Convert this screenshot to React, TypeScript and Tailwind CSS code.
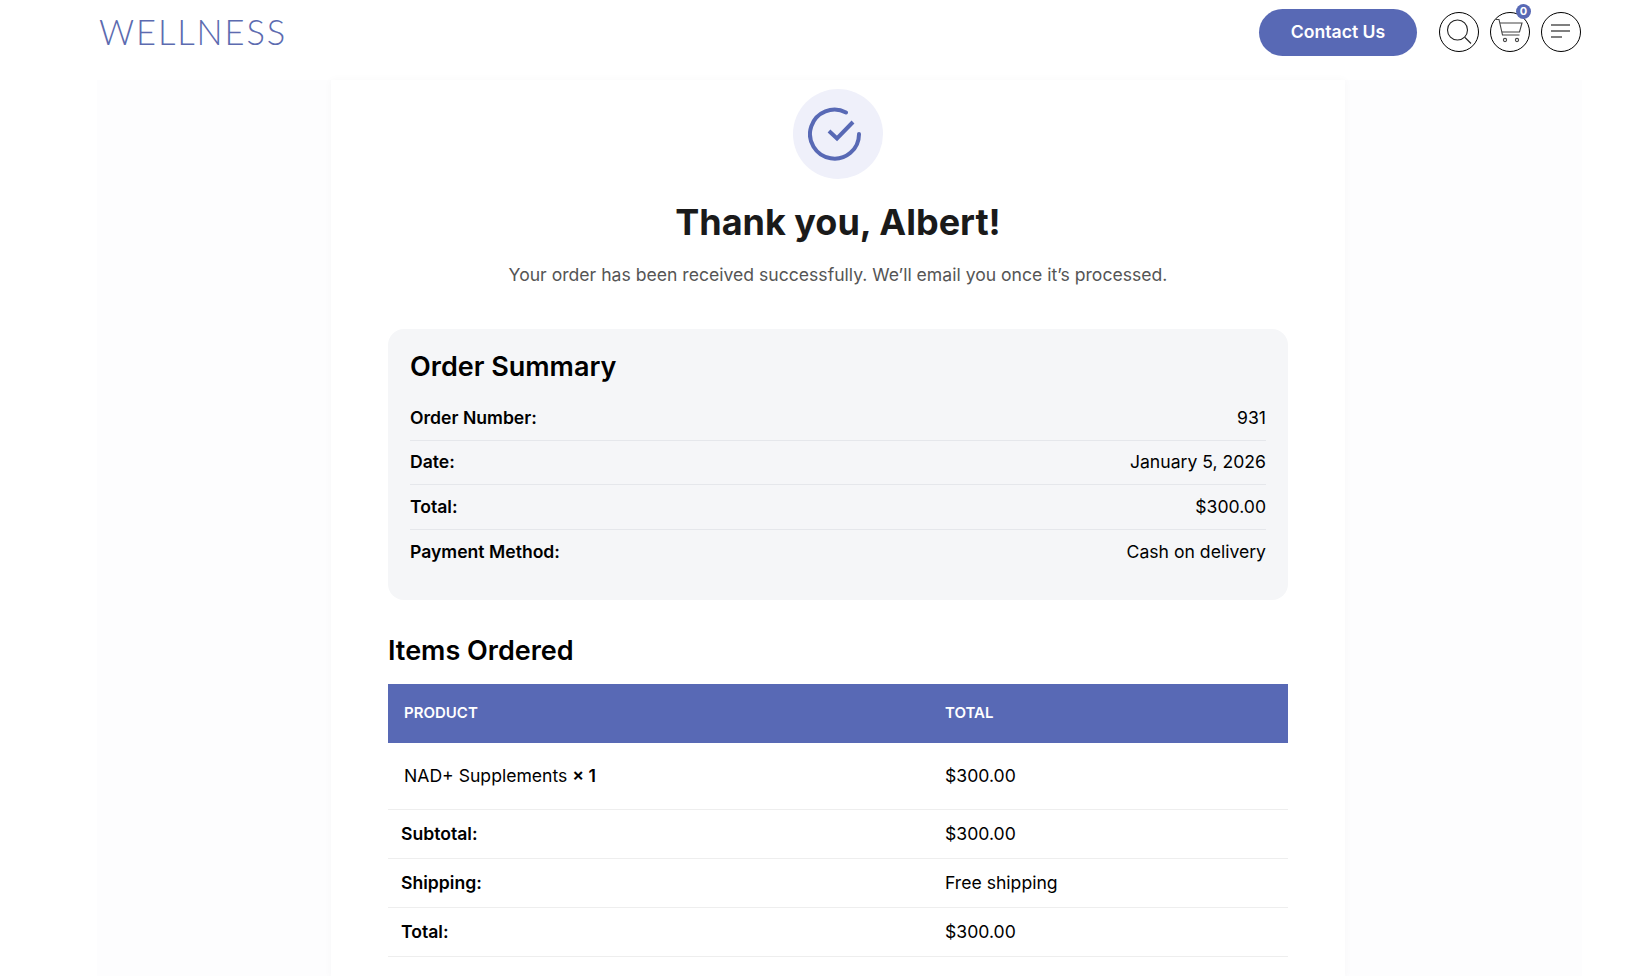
const SummaryRow = ({ label, value, last }: { label: string; value: string; last?: boolean }) => (
  <div className={`flex items-center justify-between h-[44.5px] text-[17.6px] text-black ${last ? '' : 'border-b border-[#e5e7eb]'}`}>
    <span className="font-semibold">{label}</span>
    <span>{value}</span>
  </div>
);

const TotalRow = ({ label, value }: { label: string; value: string }) => (
  <div className="flex items-center h-[49px] border-b border-[#eeeeee] text-[17.6px] text-black">
    <span className="w-[557px] pl-[13px] font-semibold">{label}</span>
    <span>{value}</span>
  </div>
);

const IconCircle = ({ children }: { children: React.ReactNode }) => (
  <div className="relative flex h-10 w-10 items-center justify-center rounded-full border border-black bg-white">
    {children}
  </div>
);

export default function App() {
  return (
    <div className="min-h-screen bg-white font-['Inter',sans-serif] overflow-hidden h-[976px]">
      <header className="flex h-[80px] items-center justify-between pl-[99px] pr-[56px] pb-[22px] pt-[6px] h-[78px]">
        <span className="font-['Lato',sans-serif] font-light text-[34.5px] leading-none tracking-[1.9px] text-[#5c6bb0]">WELLNESS</span>
        <div className="flex items-center">
          <button className="h-[47px] w-[158px] rounded-full bg-[#5869b5] text-[17.6px] font-semibold text-white">Contact Us</button>
          <div className="ml-[22px] flex items-center gap-[11px]">
            <IconCircle>
              <svg width="32" height="32" viewBox="0 0 32 32" fill="none" stroke="#222" strokeWidth="1.1">
                <circle cx="14.5" cy="14" r="10" />
                <path d="M22 21.5l6 6" />
              </svg>
            </IconCircle>
            <IconCircle>
              <svg width="30" height="30" viewBox="0 0 30 30" fill="none" stroke="#444" strokeWidth="1.1">
                <path d="M1 2.5h3l3.5 15.5h17" />
                <path d="M5 6h22l-2.5 9H7" />
                <circle cx="10" cy="23" r="1.6" />
                <circle cx="22" cy="23" r="1.6" />
              </svg>
              <span className="absolute -right-[2px] -top-[9px] flex h-[15px] w-[15px] items-center justify-center rounded-full bg-[#5869b5] text-[11px] font-bold text-white">0</span>
            </IconCircle>
            <IconCircle>
              <svg width="24" height="24" viewBox="0 0 24 24" fill="none" stroke="#555" strokeWidth="1.3">
                <path d="M2 5h19M2 11h19M2 17h11" />
              </svg>
            </IconCircle>
          </div>
        </div>
      </header>

      <main className="mx-[97px] w-[1485px] bg-[#fdfdfe] h-[898px]">
        <div className="ml-[234px] w-[1014px] h-full bg-white px-[57px] pt-[9px] shadow-[0_0_8px_rgba(0,0,0,0.03)]">
          <div className="mx-auto flex h-[90px] w-[90px] items-center justify-center rounded-full bg-[#eff0fa]">
            <svg width="60" height="60" viewBox="0 0 60 60" fill="none" stroke="#5869b5" strokeWidth="4" strokeLinecap="round">
              <path d="M51 30a24.5 24.5 0 1 1-13-21.5" />
              <path d="M21 27l8 7.5L45 18" strokeLinecap="butt" />
            </svg>
          </div>
          <h1 className="mt-[18px] text-center text-[36px] font-bold leading-[50px] text-[#1a1a1a]">Thank you, Albert!</h1>
          <p className="mt-[14px] text-center text-[17.6px] leading-[28px] text-[#555555]">
            Your order has been received successfully. We’ll email you once it’s processed.
          </p>

          <section className="mt-[40px] rounded-2xl bg-[#f5f6f8] px-[22px] pt-[19px] pb-[20px] h-[271px]">
            <h2 className="text-[27px] font-semibold leading-[38px] text-black">Order Summary</h2>
            <div className="mt-[10px]">
              <SummaryRow label="Order Number:" value="931" />
              <SummaryRow label="Date:" value="January 5, 2026" />
              <SummaryRow label="Total:" value="$300.00" />
              <SummaryRow label="Payment Method:" value="Cash on delivery" last />
            </div>
          </section>

          <h2 className="mt-[32px] text-[27px] font-semibold leading-[38px] text-black">Items Ordered</h2>
          <div className="mt-[14px] flex h-[59px] items-center bg-[#5869b5] text-[15px] font-semibold text-white">
            <span className="w-[557px] pl-[16px]">PRODUCT</span>
            <span className="pl-[0px]">TOTAL</span>
          </div>
          <div className="flex h-[67px] items-center border-b border-[#eeeeee] text-[17.6px] text-black">
            <span className="w-[557px] pl-[16px]">NAD+ Supplements <strong className="font-semibold">× 1</strong></span>
            <span>$300.00</span>
          </div>
          <TotalRow label="Subtotal:" value="$300.00" />
          <TotalRow label="Shipping:" value="Free shipping" />
          <TotalRow label="Total:" value="$300.00" />
        </div>
      </main>
    </div>
  );
}
